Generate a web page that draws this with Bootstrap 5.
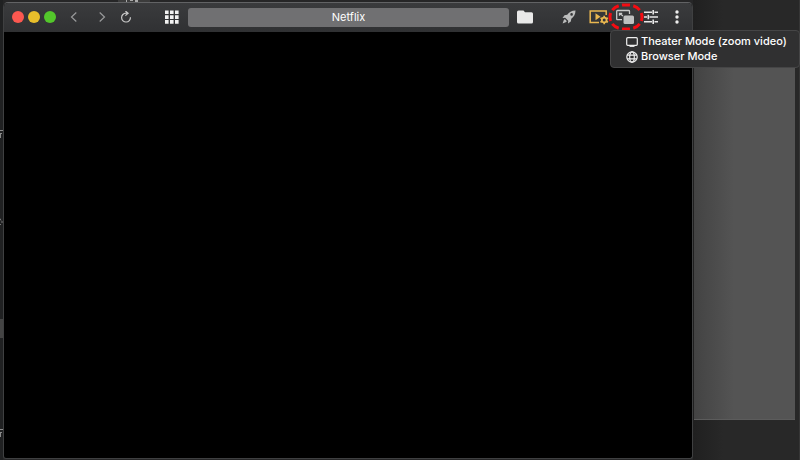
<!DOCTYPE html>
<html lang="en">
<head>
<meta charset="utf-8">
<meta name="viewport" content="width=device-width, initial-scale=1">
<title>Netflix</title>
<link href="https://cdn.jsdelivr.net/npm/bootstrap@5.3.0/dist/css/bootstrap.min.css" rel="stylesheet">
<style>
body { font-family: Inter, "Liberation Sans", sans-serif; font-size: 11px; background: #262627; color: #fff; }
.desktop { height: 100vh; }
.gutter { width: 3px; background: #202122; }
.scrap { right: 0; }
.scrap-one { top: 129px; }
.scrap-two { top: 217px; }
.scrap-three { top: 428px; }
.thumb { top: 319px; width: 3px; height: 19px; background: #444; }
.backdrop-tab { top: 0; left: 118px; }
.app-window { margin-top: 2px; margin-bottom: 1px; background: #000; border: 1px solid #3f4041; border-top-color: #626365; border-radius: 5px 5px 3px 3px; }
.toolbar { height: 29px; padding: 0 3px 1px 8px; border-radius: 4px 4px 0 0; background: linear-gradient(#3a3b3d, #303133); color: #eee; }
.lights { gap: 4px; margin-right: 6px; }
.light { width: 12px; height: 12px; border: 0; padding: 0; border-radius: 50%; }
.close-light { background: #fc5850; }
.min-light { background: #e9bf2b; }
.max-light { background: #53c72b; }
.tool { width: 24px; height: 24px; padding: 0; border: 0; background: none; color: inherit; display: flex; align-items: center; justify-content: center; flex: none; }
.tool svg, .mode svg { display: block; flex: none; }
.dim { color: #999a9b; }
.apps { margin-left: 22px; }
.address { min-width: 0; height: 19px; border: 0; border-radius: 3px; background: #707072; color: #fff; text-align: center; font-size: 11px; margin: 0 4px; padding: 0; }
.tool-group { margin-left: 20px; gap: 2px; }
.ring { left: -5px; top: -2px; pointer-events: none; }
.mode-menu { position: absolute; top: 30px; right: 0; width: 190px; padding: 3px 0 3px 15px; background: #303031; border: 1px solid #454546; border-radius: 4px; z-index: 5; }
.mode { display: flex; align-items: center; gap: 3px; height: 15px; padding: 0; border: 0; background: none; color: #fff; font-size: 11px; line-height: 15px; font-weight: 500; white-space: nowrap; }
.side { width: 107px; padding: 31px 4px 40px 1px; background: linear-gradient(90deg, #202020, #282828 30px); border-right: 1px solid #363636; }
.side-panel { background: linear-gradient(90deg, #434343, #545454 40px); border-bottom: 1px solid #5c5c5c; }
</style>
<script src="https://cdn.jsdelivr.net/npm/bootstrap@5.3.0/dist/js/bootstrap.bundle.min.js"></script>
</head>
<body>
<div class="desktop d-flex position-relative overflow-hidden">
  <div class="gutter position-relative flex-shrink-0" aria-hidden="true">
    <svg class="scrap scrap-one position-absolute" width="3" height="9" stroke="#8b8b8b"><path d="M0 1.500h3M0 4.500h2M.5 4v5"/></svg>
    <svg class="scrap scrap-two position-absolute" width="3" height="9" stroke="#777" fill="none"><path d="M0 1.500l1 2M1 5h2M0 8l1-1"/></svg>
    <div class="thumb position-absolute"></div>
    <svg class="scrap scrap-three position-absolute" width="3" height="9" stroke="#8b8b8b"><path d="M0 1.500h3M0 4.500h2M.5 4v5"/></svg>
  </div>
  <svg class="backdrop-tab position-absolute" width="32" height="2"><path fill="#3c3c3c" d="M0 0h32v2H0z"/><path fill="#aaa" d="M8 0h1v2H8zM12 0h3v1h-3zM17 0h3v2h-3z"/></svg>
  <main class="app-window flex-grow-1 d-flex flex-column">
    <header class="toolbar d-flex align-items-center">
      <div class="lights d-flex">
        <button class="light close-light" aria-label="Close"></button>
        <button class="light min-light" aria-label="Minimize"></button>
        <button class="light max-light" aria-label="Zoom"></button>
      </div>
      <button class="tool dim me-1" aria-label="Back"><svg width="12" height="12" fill="none" stroke="currentColor" stroke-width="1.2"><path d="M8.3 1.500 3.500 6l4.800 4.500"/></svg></button>
      <button class="tool dim" aria-label="Forward"><svg width="12" height="12" fill="none" stroke="currentColor" stroke-width="1.2"><path d="M3.700 1.500 8.500 6l-4.800 4.500"/></svg></button>
      <button class="tool" aria-label="Reload"><svg width="12" height="12" fill="none" stroke="#c8c8c8" stroke-width="1.2"><path d="M10.400 6.300A4.400 4.400 0 1 1 6 2.200h1.600M5.400 0l2.700 2.200-2.700 2.400"/></svg></button>
      <button class="tool apps" aria-label="Apps"><svg width="14" height="14" fill="#f2f2f2"><path d="M0 .5h3.600v3.600H0zM5 .5h3.600v3.600H5zM10 .5h3.600v3.600H10zM0 5.300h3.600v3.600H0zM5 5.300h3.600v3.600H5zM10 5.300h3.600v3.600H10zM0 10.100h3.600v3.600H0zM5 10.100h3.600v3.600H5zM10 10.100h3.600v3.600H10z"/></svg></button>
      <input class="address flex-grow-1" type="text" value="Netflix" aria-label="Address">
      <button class="tool" aria-label="Bookmarks"><svg width="16" height="14" fill="#e9e9e9"><path d="M1.500.5h5L8 2.300h6.500q1.500 0 1.500 1.500V12q0 1.500-1.500 1.500h-13Q0 13.500 0 12V2Q0 .5 1.500.5z"/></svg></button>
      <div class="tool-group d-flex">
      <button class="tool me-1" aria-label="Boost"><svg width="14" height="14"><path fill="#bcbdbd" fill-rule="evenodd" d="M13.500.5C9.500.5 7.200 2.300 5.200 4.700L2.500 5.200.5 8l2.700-.2L6.200 10.800 6 13.500l2.800-2 .5-2.700c2.400-2 4.200-4.300 4.200-8.300zM9.600 3.100a1.300 1.300 0 1 1 0 2.600 1.300 1.300 0 0 1 0-2.600zM2.800 9.100l2.100 2.100L3.700 12.300.6 13.400 1.700 10.300z"/></svg></button>
      <button class="tool" aria-label="Player settings"><svg width="20" height="16" fill="none"><path stroke="#e9b750" stroke-width="1.500" d="M10 13.500H1.200V2h16v4"/><path fill="#e9b750" d="M6.500 4.300v7l5-3.500z"/><circle cx="15.200" cy="11" r="2.400" stroke="#e9b750" stroke-width="1.800"/><path stroke="#e9b750" stroke-width="1.700" d="M15.200 6.700v1.900M15.200 13.400v1.900M11.500 8.900l1.600 1M17.300 12.200l1.600 1M18.900 8.900l-1.600 1M13.100 12.200l-1.600 1"/></svg></button>
      <div class="position-relative">
        <button class="tool" aria-label="View mode" aria-expanded="true"><svg width="20" height="16"><path d="M7 10.700H2.500Q1.700 10.700 1.700 9.900V2.300Q1.700 1.500 2.500 1.500h11.200q.8 0 .8.800V5M4.500 4.300l3.500 2.700M4.500 6.800V4.300h2.700" fill="none" stroke="#c9c9c9" stroke-width="1.300"/><rect x="8.500" y="6.500" width="10.500" height="8.500" rx="1.500" fill="#bfc0c0"/></svg></button>
        <svg class="ring position-absolute" width="36" height="28" fill="none"><path d="M18 2h2c8 0 14 5 14 12s-6 12-14 12h-4C8 26 2 21 2 14S8 2 16 2z" pathLength="80" stroke="#f60c12" stroke-width="3" stroke-dasharray="7 3" stroke-dashoffset="3.500"/></svg>
      </div>
      <button class="tool" aria-label="Settings"><svg width="14" height="14" fill="none" stroke="#e8e8e8" stroke-width="1.600"><path d="M0 2.200h8M10.500 2.200H14M9.200 0v4.400M0 7h3M5.500 7H14M4.300 4.800v4.400M0 11.800h8M10.500 11.800H14M9.200 9.600V14"/></svg></button>
      <button class="tool" aria-label="More"><svg width="4" height="14" fill="#eee"><circle cx="2" cy="2" r="1.700"/><circle cx="2" cy="7" r="1.700"/><circle cx="2" cy="12" r="1.700"/></svg></button>
      </div>
    </header>
    <section class="flex-grow-1" aria-label="Video"></section>
  </main>
  <aside class="side d-flex flex-column flex-shrink-0"><div class="side-panel flex-grow-1"></div></aside>
  <div class="mode-menu" role="menu">
    <button class="mode" role="menuitem"><svg width="12" height="12" fill="none" stroke="#eee" stroke-width="1.200"><rect x=".7" y="1.700" width="10.600" height="7.600" rx="1"/><path d="M3.500 10.300h5"/></svg>Theater Mode (zoom video)</button>
    <button class="mode" role="menuitem"><svg width="12" height="12" fill="none" stroke="#eee" stroke-width="1.200"><circle cx="6" cy="6" r="5.200"/><ellipse cx="6" cy="6" rx="2.300" ry="5.200"/><path d="M1.200 4.200h9.600M1.200 7.800h9.600"/></svg>Browser Mode</button>
  </div>
</div>
</body>
</html>
